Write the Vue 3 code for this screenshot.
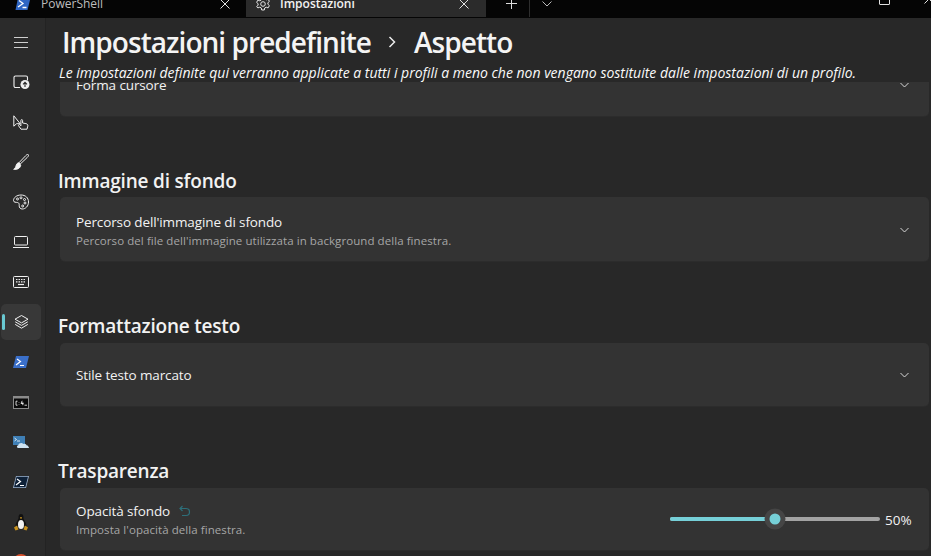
<script setup>
import { ref } from 'vue'
const opacity = ref(50)
</script>

<template>
  <div class="window">
    <header class="tabbar">
      <div class="tab">
        <svg class="ps" width="16" height="14" viewBox="0 0 16 14"><path d="M3 1h12.5l-3 12H.5z" fill="#2f66c4"/><path d="M4 3.500l4 3-5 3.500M7.500 10.500h4" fill="none" stroke="#fff" stroke-width="1.300"/></svg>
        <span class="tab-title">PowerShell</span>
        <svg class="close" width="10" height="10" viewBox="0 0 10 10"><path d="M.5.500l9 9M9.500.500l-9 9" stroke="#e2e2e2" fill="none"/></svg>
      </div>
      <div class="tab active">
        <svg class="gear" width="16" height="16" viewBox="0 0 16 16" fill="none" stroke="#e6e6e6"><circle cx="8" cy="8" r="2.300"/><path d="M6.700 1h2.600l.4 2 1.500.8 1.900-.7 1.300 2.300-1.500 1.300v1.600l1.500 1.300-1.300 2.300-1.900-.7-1.500.8-.4 2H6.700l-.4-2-1.500-.8-1.900.7L1.600 10.600l1.500-1.300V7.700L1.600 6.400l1.300-2.300 1.900.7 1.500-.8z"/></svg>
        <span class="tab-title strong">Impostazioni</span>
        <svg class="close" width="10" height="10" viewBox="0 0 10 10"><path d="M.5.500l9 9M9.500.500l-9 9" stroke="#e2e2e2" fill="none"/></svg>
      </div>
      <div class="tab-actions">
        <svg width="11" height="11" viewBox="0 0 11 11"><path d="M5.500 0v11M0 5.500h11" stroke="#dcdcdc" fill="none"/></svg>
        <span class="act-sep"></span>
        <svg width="10" height="6" viewBox="0 0 10 6"><path d="M.5.500L5 5 9.500.500" stroke="#bbb" fill="none"/></svg>
      </div>
      <div class="caption">
        <span class="max"></span>
        <svg width="10" height="10" viewBox="0 0 10 10"><path d="M.5.500l9 9M9.500.500l-9 9" stroke="#e2e2e2" fill="none"/></svg>
      </div>
    </header>

    <div class="body">
      <nav class="rail">
        <div class="rail-item">
          <svg width="14" height="11" viewBox="0 0 14 11"><path d="M0 .500h14M0 5.500h14M0 10.500h14" stroke="#cfcfcf" fill="none"/></svg>
        </div>
        <div class="rail-item">
          <svg width="17" height="14" viewBox="0 0 17 14" fill="none"><path d="M7 12.500H2.500A1.500 1.500 0 0 1 1 11V2.500A1.500 1.500 0 0 1 2.500 1h10.500A1.500 1.500 0 0 1 14.500 2.500V5.500" stroke="#f0f0f0" stroke-width="1.100"/><circle cx="12" cy="9.500" r="4.500" fill="#f0f0f0"/><path d="M12 12V7.500M10 9.300l2-2 2 2" stroke="#2b2b2b" stroke-width="1.100"/></svg>
        </div>
        <div class="rail-item">
          <svg width="17" height="15" viewBox="0 0 17 15" fill="none" stroke="#f0f0f0" stroke-width="1"><path d="M.8.800v10.400l2.800-2.500h3.600z"/><path d="M8 14.200l-2.400-3.400c-.6-1 .7-1.800 1.400-.9l.9 1V5.500c0-1.200 1.700-1.200 1.700 0V8l3.300.6c1.500.3 2.200 1.200 1.900 2.500l-.8 3.100z"/></svg>
        </div>
        <div class="rail-item">
          <svg width="16" height="16" viewBox="0 0 16 16" fill="none" stroke="#f0f0f0" stroke-width="1"><path d="M15.300.7c-.8-.6-1.700 0-2.600 1L6.300 8.400l1.300 1.300 6.600-6.200c1-1 1.700-2 1.100-2.800z"/><path d="M6 8.800c-2 .2-2.600 1.500-3 3.200-.3 1.300-1 2.300-2.300 3.300 3.300.3 6.500-.7 7-4.100z" fill="#f0f0f0"/></svg>
        </div>
        <div class="rail-item">
          <svg width="16" height="16" viewBox="0 0 16 16" fill="none" stroke="#f0f0f0" stroke-width="1"><path d="M8 1C3.500 1 .5 3.800.5 6.500c0 2 2.700 1.800 4 2 1.500.2 1.800 1.500 1.700 3-.1 2 1 3.500 3 3.500 3.500 0 6.300-3 6.300-7C15.500 3.800 12.500 1 8 1z"/><circle cx="4.500" cy="5" r="1"/><circle cx="8" cy="3.800" r="1"/><circle cx="11.500" cy="5.500" r="1"/><circle cx="12" cy="9" r="1"/><circle cx="9.700" cy="12" r="1"/></svg>
        </div>
        <div class="rail-item">
          <svg width="16" height="12" viewBox="0 0 16 12" fill="none" stroke="#f0f0f0" stroke-width="1"><rect x="1.500" y=".5" width="13" height="8.500" rx="1"/><path d="M0 11.500h16"/></svg>
        </div>
        <div class="rail-item">
          <svg width="16" height="12" viewBox="0 0 16 12" fill="none" stroke="#f0f0f0"><rect x=".5" y=".5" width="15" height="11" rx="1"/><path d="M3 3.500h10M3 5.800h10" stroke-dasharray="1.500 1" stroke-width="1.200"/><path d="M5 8.500h6" stroke-width="1.200"/></svg>
        </div>
        <div class="rail-item selected">
          <span class="indicator"></span>
          <svg width="15" height="14" viewBox="0 0 15 14" fill="none" stroke="#f0f0f0" stroke-width="1" stroke-linejoin="round"><path d="M7.500.5l6.500 3.700-6.500 3.700L1 4.200z"/><path d="M1.200 6.800l6.300 3.600 6.300-3.600M1.200 9.400l6.300 3.800 6.300-3.800"/></svg>
        </div>
        <div class="rail-item">
          <svg width="16" height="12" viewBox="0 0 16 12"><path d="M3 0h13l-3 12H0z" fill="#3a6fc9"/><path d="M4 3l3.500 2.500L3 9M7 9.500h4" fill="none" stroke="#fff" stroke-width="1.200"/></svg>
        </div>
        <div class="rail-item">
          <svg width="16" height="13" viewBox="0 0 16 13"><rect width="16" height="13" fill="#8a8a8a"/><rect x="1" y="2.500" width="14" height="9.500" fill="#0a0a0a"/><path d="M4.500 5.200H3v4h1.500M6 6.200v.5M6 8.500v.5M9.200 4.800L8 7.500h2.500M9.800 6.200v3M11.500 9.200h2.500" fill="none" stroke="#fff" stroke-width=".8"/></svg>
        </div>
        <div class="rail-item">
          <svg width="16" height="12" viewBox="0 0 16 12"><rect width="12" height="9" fill="#3f7fb5"/><path d="M1.500 2l2 1.500-2 1.500M4 5h3" fill="none" stroke="#fff" stroke-width=".8"/><path d="M5 12c-1.500-.2-1.500-2.500.3-2.700C5.500 7 9 6.200 10.300 8c1.500-.8 3.200.2 3.200 1.300 1.700 0 2.500 2.300 2.500 2.700z" fill="#cfe3f2"/></svg>
        </div>
        <div class="rail-item">
          <svg width="16" height="12" viewBox="0 0 16 12"><path d="M3 0h13l-3 12H0z" fill="#9fb4cf"/><path d="M3.500.8h11.500L12.400 11.200H1z" fill="#0e2138"/><path d="M4 3l3.500 2.500L3 9M7 9.500h4" fill="none" stroke="#fff" stroke-width="1.200"/></svg>
        </div>
        <div class="rail-item">
          <svg width="14" height="17" viewBox="0 0 14 17"><path d="M7 0C4.800 0 4.500 2 4.500 4c0 2-3 4.500-3 8h11c0-3.500-3-6-3-8 0-2-.3-4-2.500-4z" fill="#111"/><ellipse cx="7" cy="10.500" rx="3" ry="4.500" fill="#f2f2f2"/><path d="M5.800 3.700L7 3l1.200.7L7 5z" fill="#d49a1e"/><path d="M0 13.500l3-2 1.500 4-3 1zM14 13.500l-3-2-1.500 4 3 1z" fill="#c9921c"/></svg>
        </div>
        <div class="rail-item">
          <svg width="16" height="16" viewBox="0 0 16 16"><circle cx="8" cy="8" r="8" fill="#d9512c"/></svg>
        </div>
      </nav>

      <main class="page">
        <div class="page-head">
          <h1 class="crumbs">
            <span>Impostazioni predefinite</span>
            <svg width="9" height="12" viewBox="0 0 9 12"><path d="M1.500 1l5 5-5 5" fill="none" stroke="#ececec" stroke-width="1.500"/></svg>
            <span>Aspetto</span>
          </h1>
          <p class="note">Le impostazioni definite qui verranno applicate a tutti i profili a meno che non vengano sostituite dalle impostazioni di un profilo.</p>
        </div>

        <div class="scroller">
          <section class="card first">
            <div class="card-text"><div class="label">Forma cursore</div></div>
            <svg class="chev" width="9" height="6" viewBox="0 0 9 6"><path d="M.5 1l4 4 4-4" fill="none" stroke="#d8d8d8"/></svg>
          </section>

          <h2 class="section">Immagine di sfondo</h2>
          <section class="card tall">
            <div class="card-text">
              <div class="label">Percorso dell'immagine di sfondo</div>
              <div class="desc">Percorso del file dell'immagine utilizzata in background della finestra.</div>
            </div>
            <svg class="chev" width="9" height="6" viewBox="0 0 9 6"><path d="M.5 1l4 4 4-4" fill="none" stroke="#d8d8d8"/></svg>
          </section>

          <h2 class="section lift">Formattazione testo</h2>
          <section class="card single">
            <div class="card-text"><div class="label">Stile testo marcato</div></div>
            <svg class="chev" width="9" height="6" viewBox="0 0 9 6"><path d="M.5 1l4 4 4-4" fill="none" stroke="#d8d8d8"/></svg>
          </section>

          <h2 class="section lift">Trasparenza</h2>
          <section class="card last">
            <div class="card-text">
              <div class="label">Opacità sfondo
                <svg class="reset" width="12" height="12" viewBox="0 0 12 12" fill="none" stroke="#2d6f7a" stroke-width="1.200"><path d="M3.500 1L1 3.500 3.500 6M1 3.500h6a3.500 3.500 0 0 1 0 7H3"/></svg>
              </div>
              <div class="desc">Imposta l'opacità della finestra.</div>
            </div>
            <div class="slider">
              <div class="track">
                <span class="fill" :style="{ width: opacity + '%' }"></span>
                <span class="thumb" :style="{ left: opacity + '%' }"></span>
              </div>
              <span class="value">{{ opacity }}%</span>
            </div>
          </section>
        </div>
      </main>
    </div>
  </div>
</template>

<style>
html, body { margin: 0; background: #282828; }
</style>

<style scoped>
.window {
  width: 931px;
  height: 556px;
  display: flex;
  flex-direction: column;
  overflow: hidden;
  background: #282828;
  color: #fff;
  font-family: "Open Sans", "Noto Sans", sans-serif;
}
.tabbar {
  flex: 0 0 18px;
  height: 18px;
  display: flex;
  overflow: hidden;
  background: #050505;
  align-items: flex-start;
}
.tab {
  flex: 0 0 238px;
  height: 27px;
  box-sizing: border-box;
  display: flex;
  align-items: center;
  padding: 0 8px 0 15px;
  margin-top: -10px;
  font-size: 12px;
  color: #bdbdbd;
  margin-right: 8px;
}
.tab.active {
  flex: 0 0 240px;
  background: #2b2b2b;
  color: #f2f2f2;
  border-radius: 6px 6px 0 0;
  margin-right: 0;
  padding-left: 9px;
  padding-right: 17px;
}
.tab .ps { margin-right: 10px; }
.tab .gear { margin-right: 9px; }
.tab-title { flex: 1; }
.tab-title.strong { font-weight: 600; }
.tab-actions {
  display: flex;
  align-items: center;
  height: 27px;
  margin-top: -10px;
  margin-left: 20px;
}
.act-sep {
  width: 1px;
  height: 27px;
  background: #2e2e2e;
  margin: 0 12px;
}
.caption {
  margin-left: auto;
  display: flex;
  align-items: center;
  height: 10px;
  gap: 34px;
  margin-right: -3px;
}
.max {
  width: 9px;
  height: 9px;
  border: 1px solid #e2e2e2;
  border-radius: 1px;
  margin-top: -12px;
}
.caption svg { margin-top: -12px; }
.body {
  flex: 1;
  display: flex;
  min-height: 0;
}
.rail {
  flex: 0 0 45px;
  background: #2b2b2b;
  border-right: 1px solid #232323;
  padding-top: 6px;
  overflow: hidden;
}
.rail-item {
  position: relative;
  width: 40px;
  height: 36px;
  margin: 0 0 4px 1px;
  display: flex;
  align-items: center;
  justify-content: center;
  border-radius: 5px;
}
.rail-item.selected { background: #383838; }
.indicator {
  position: absolute;
  left: 1px;
  top: 10px;
  width: 3px;
  height: 16px;
  border-radius: 2px;
  background: #69c9d2;
}
.page {
  flex: 1;
  min-width: 0;
  display: flex;
  flex-direction: column;
}
.page-head {
  position: relative;
  z-index: 1;
  flex: 0 0 auto;
  height: 64px;
  padding-left: 13px;
}
.crumbs {
  margin: 5px 0 0 3px;
  height: 38px;
  display: flex;
  align-items: center;
  gap: 17px;
  font-size: 28px;
  font-weight: 600;
  color: #f4f4f4;
  letter-spacing: -.95px;
}
.note {
  margin: 2px 0 0;
  font-size: 14px;
  line-height: 20px;
  font-style: italic;
  color: #fafafa;
  white-space: nowrap;
  letter-spacing: 0;
}
.scroller {
  flex: 1;
  min-height: 0;
  overflow: hidden;
  padding: 0 2px 0 14px;
}
.card {
  display: flex;
  align-items: center;
  justify-content: space-between;
  box-sizing: border-box;
  height: 65px;
  padding: 1px 20px 0 16px;
  background: #333333;
  border-bottom: 1px solid #2c2c2c;
  border-radius: 5px;
}
.card.first { margin-top: -30px; margin-bottom: -1px; }
.card.first .card-text, .card.tall .card-text { padding-top: 2px; }
.card.single { height: 64px; }
.card.last { height: 63px; }
.label {
  font-size: 13.500px;
  line-height: 19px;
  color: #f2f2f2;
  letter-spacing: -.12px;
}
.desc {
  font-size: 11.500px;
  line-height: 16px;
  margin-top: 1px;
  color: #a6a6a6;
  letter-spacing: .07px;
}
.section {
  margin: 51px 0 2px -2px;
  height: 28px;
  line-height: 28px;
  font-size: 19px;
  font-weight: 600;
  color: #f2f2f2;
  letter-spacing: -.2px;
}
.section.lift { margin-top: 50px; margin-bottom: 3px; }
.reset { margin-left: 6px; vertical-align: -1px; }
.slider {
  display: flex;
  align-items: center;
  margin-right: -3px;
}
.track {
  position: relative;
  width: 210px;
  height: 4px;
  border-radius: 2px;
  background: #a3a3a3;
  margin-top: -2px;
}
.fill {
  position: absolute;
  left: 0;
  top: 0;
  bottom: 0;
  border-radius: 2px;
  background: #76d0d8;
}
.thumb {
  position: absolute;
  top: 50%;
  width: 11px;
  height: 11px;
  border-radius: 50%;
  background: #76d0d8;
  border: 5px solid #454545;
  transform: translate(-50%, -50%);
}
.value {
  width: 27px;
  margin-left: 5px;
  font-size: 13.500px;
  color: #f2f2f2;
}
</style>
